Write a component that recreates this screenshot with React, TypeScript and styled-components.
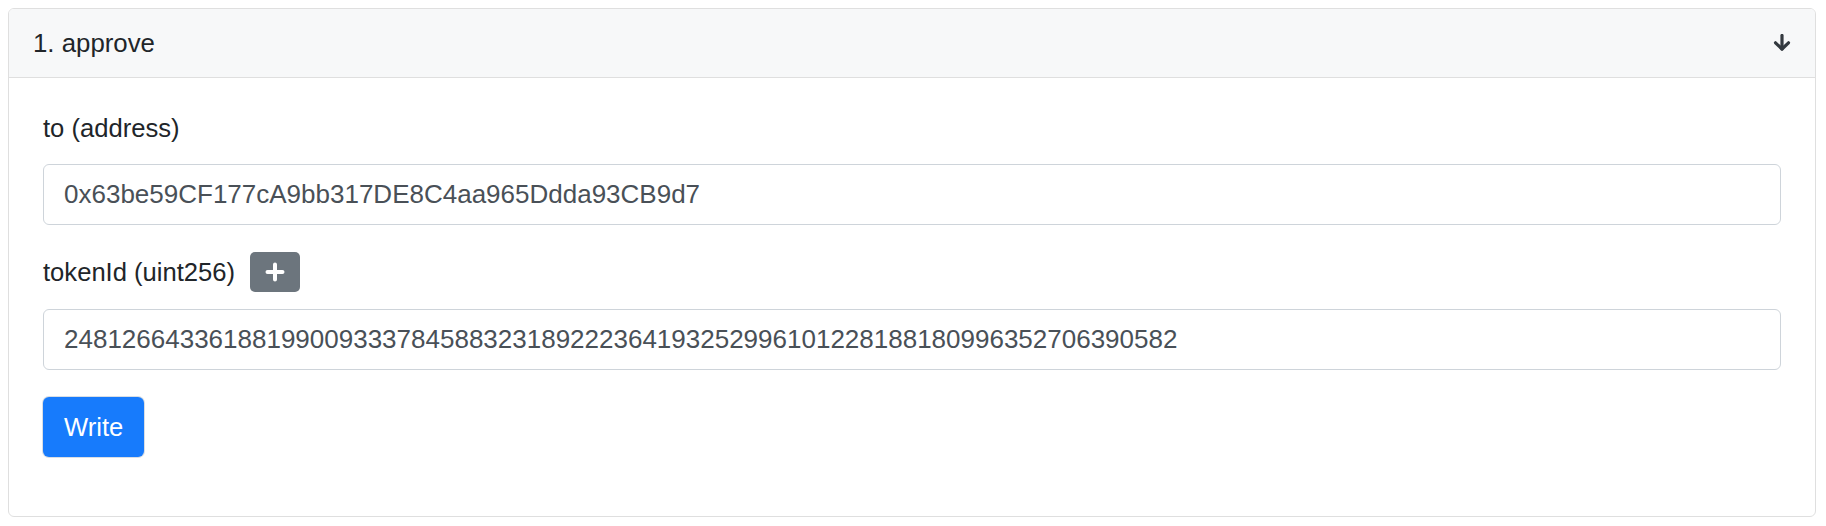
import React from "react";
import styled, { createGlobalStyle } from "styled-components";

const GlobalStyle = createGlobalStyle`
  body {
    margin: 8px;
    background: #ffffff;
    font-family: "Liberation Sans", Arial, Helvetica, sans-serif;
    color: #212529;
  }
  * { box-sizing: border-box; }
`;

const Card = styled.div`
  margin-right: 2px;
  border: 1px solid #dfdfdf;
  border-radius: 6px;
  background: #ffffff;
  overflow: hidden;
`;

const Header = styled.div`
  display: flex;
  align-items: center;
  justify-content: space-between;
  height: 69px;
  padding: 0 24px 1px 24px;
  background: #f7f8f9;
  border-bottom: 1px solid #dfdfdf;
  font-size: 25.8px;
  line-height: 38px;
  color: #212529;
`;

const Body = styled.div`
  padding: 31px 34px 59px 34px;
`;

const FormGroup = styled.div`
  margin-bottom: 27px;
`;

const LabelRow = styled.label`
  display: flex;
  align-items: center;
  gap: 15px;
  min-height: 38px;
  margin-bottom: 17px;
  font-size: 25.6px;
  line-height: 38px;
  color: #212529;
`;

const AddButton = styled.button`
  display: inline-flex;
  align-items: center;
  justify-content: center;
  width: 50px;
  height: 40px;
  padding: 0;
  border: none;
  border-radius: 5px;
  background: #6c757d;
  cursor: pointer;
`;

const Field = styled.input`
  display: block;
  width: 100%;
  height: 61px;
  padding: 0 20px;
  border: 1px solid #ced4da;
  border-radius: 6px;
  background: #ffffff;
  font-family: "Liberation Sans", Arial, Helvetica, sans-serif;
  font-size: 26px;
  color: #495057;
  outline: none;
`;

const WriteButton = styled.button`
  display: inline-flex;
  align-items: center;
  justify-content: center;
  height: 60px;
  padding: 0 21px;
  border: none;
  border-radius: 6px;
  background: #177bfc;
  box-shadow: 0 0 0 1px #d9dee4;
  color: #ffffff;
  font-family: "Liberation Sans", Arial, Helvetica, sans-serif;
  font-size: 25.6px;
  cursor: pointer;
`;

const ArrowDown = () => (
  <svg width="18" height="17" viewBox="0 0 18 17" fill="none">
    <path d="M9 1.5V15" stroke="#343a40" strokeWidth="3.2" strokeLinecap="round" />
    <path d="M2.5 8.8L9 15L15.5 8.8" stroke="#343a40" strokeWidth="3.2" strokeLinecap="round" strokeLinejoin="round" />
  </svg>
);

const PlusIcon = () => (
  <svg width="20" height="20" viewBox="0 0 20 20" fill="none">
    <path d="M10 2.5V17.5M2.5 10H17.5" stroke="#ffffff" strokeWidth="4" strokeLinecap="round" />
  </svg>
);

export default function App() {
  return (
    <>
      <GlobalStyle />
      <Card>
        <Header>
          <span>1. approve</span>
          <ArrowDown />
        </Header>
        <Body>
          <FormGroup>
            <LabelRow>to (address)</LabelRow>
            <Field readOnly value="0x63be59CF177cA9bb317DE8C4aa965Ddda93CB9d7" />
          </FormGroup>
          <FormGroup>
            <LabelRow>
              tokenId (uint256)
              <AddButton type="button" aria-label="add">
                <PlusIcon />
              </AddButton>
            </LabelRow>
            <Field
              readOnly
              value="24812664336188199009333784588323189222364193252996101228188180996352706390582"
            />
          </FormGroup>
          <WriteButton type="button">Write</WriteButton>
        </Body>
      </Card>
    </>
  );
}
